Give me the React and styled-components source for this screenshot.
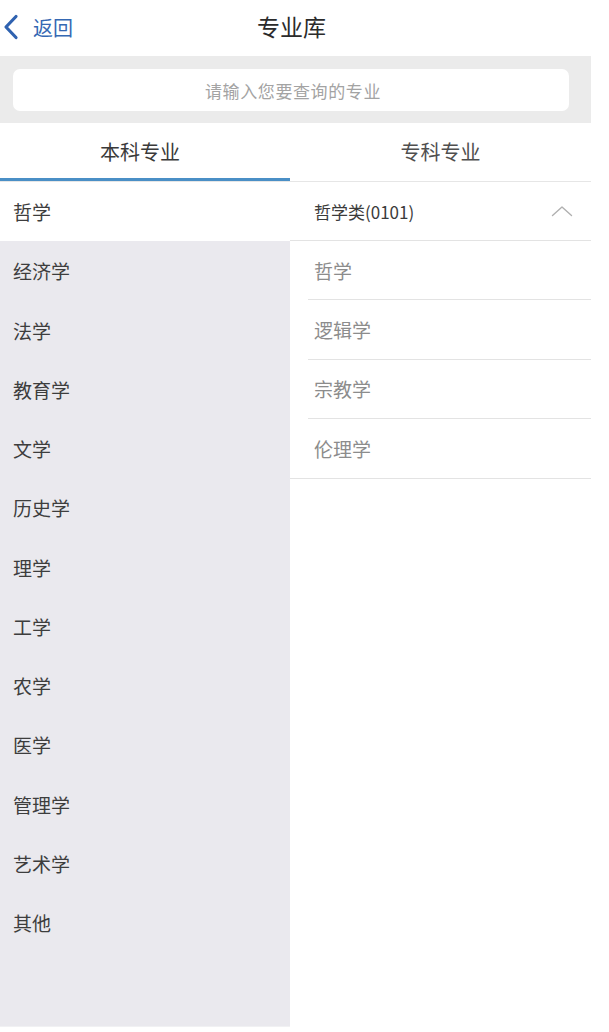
import React from "react";
import styled, { createGlobalStyle } from "styled-components";

const Global = createGlobalStyle`
  html, body { margin: 0; padding: 0; background: #ffffff; }
  body { font-family: "Noto Sans CJK SC", "Noto Sans", sans-serif; }
  * { box-sizing: border-box; }
`;

const Page = styled.div`
  width: 591px;
  height: 1032px;
  display: flex;
  flex-direction: column;
  background: #ffffff;
  overflow: hidden;
`;

const NavBar = styled.div`
  height: 56px;
  flex: none;
  position: relative;
  display: flex;
  align-items: center;
  justify-content: center;
`;

const BackButton = styled.div`
  position: absolute;
  left: 3px;
  top: 0;
  height: 56px;
  display: flex;
  align-items: center;
  gap: 14px;
  color: #3568b3;
  font-size: 20px;
  padding-bottom: 2px;
`;

const Title = styled.div`
  font-size: 23px;
  color: #2b2b2b;
  padding-bottom: 4px;
  padding-right: 8px;
`;

const SearchBand = styled.div`
  flex: none;
  height: 67px;
  background: #ebebeb;
  padding: 13px 22px 12px 13px;
`;

const SearchBox = styled.div`
  height: 42px;
  background: #ffffff;
  border-radius: 7px;
  display: flex;
  align-items: center;
  justify-content: center;
  color: #a3a3a3;
  font-size: 17px;
  letter-spacing: 0.6px;
  padding-left: 4px;
`;

const Tabs = styled.div`
  flex: none;
  height: 59px;
  display: grid;
  grid-template-columns: 290px 1fr;
  border-bottom: 1px solid #e6e6e6;
`;

const Tab = styled.div`
  display: flex;
  align-items: center;
  justify-content: center;
  font-size: 20px;
  color: ${(p) => (p.$active ? "#3a3a3a" : "#4f4f4f")};
  border-bottom: 3px solid ${(p) => (p.$active ? "#4a8fc6" : "transparent")};
  padding-top: 2px;
  padding-right: ${(p) => (p.$active ? "10px" : "0")};
`;

const Body = styled.div`
  flex: 1;
  display: flex;
  min-height: 0;
`;

const LeftColumn = styled.div`
  width: 290px;
  flex: none;
  height: 845px;
  background: #eae9ee;
  border-bottom: 1px solid #f1f1f3;
  display: flex;
  flex-direction: column;
`;

const LeftItem = styled.div`
  height: 59.25px;
  flex: none;
  display: flex;
  align-items: center;
  padding-left: 13px;
  font-size: 19px;
  color: #3d3d3d;
  background: ${(p) => (p.$active ? "#ffffff" : "transparent")};
`;

const RightColumn = styled.div`
  flex: 1;
  display: flex;
  flex-direction: column;
`;

const GroupHeader = styled.div`
  height: 59px;
  display: flex;
  align-items: center;
  justify-content: space-between;
  padding: 0 18px 0 24px;
  border-bottom: 1px solid #e3e3e3;
  font-size: 17px;
  color: #3b3b3b;
`;

const SubList = styled.div`
  display: flex;
  flex-direction: column;
  border-bottom: 1px solid #e3e3e3;
`;

const SubItem = styled.div`
  height: 59.25px;
  margin-left: 18px;
  padding-left: 6px;
  display: flex;
  align-items: center;
  font-size: 19px;
  color: #8c8c8c;
  border-bottom: ${(p) => (p.$last ? "none" : "1px solid #e3e3e3")};
`;

const ChevronLeft = () => (
  <svg width="16" height="26" viewBox="0 0 16 26" fill="none">
    <path d="M13 2.5 L3 13 L13 23.5" stroke="#2f62b0" strokeWidth="3.2" strokeLinecap="round" strokeLinejoin="round" />
  </svg>
);

const ChevronUp = () => (
  <svg width="22" height="12" viewBox="0 0 22 12" fill="none">
    <path d="M1.5 10.5 L11 2 L20.5 10.5" stroke="#b0b0b0" strokeWidth="1.4" strokeLinecap="round" strokeLinejoin="round" />
  </svg>
);

const categories = [
  "哲学", "经济学", "法学", "教育学", "文学", "历史学", "理学",
  "工学", "农学", "医学", "管理学", "艺术学", "其他",
];

const majors = ["哲学", "逻辑学", "宗教学", "伦理学"];

export default function App() {
  return (
    <>
      <Global />
      <Page>
        <NavBar>
          <BackButton>
            <ChevronLeft />
            <span>返回</span>
          </BackButton>
          <Title>专业库</Title>
        </NavBar>
        <SearchBand>
          <SearchBox>请输入您要查询的专业</SearchBox>
        </SearchBand>
        <Tabs>
          <Tab $active>本科专业</Tab>
          <Tab>专科专业</Tab>
        </Tabs>
        <Body>
          <LeftColumn>
            {categories.map((c, i) => (
              <LeftItem key={c + i} $active={i === 0}>{c}</LeftItem>
            ))}
          </LeftColumn>
          <RightColumn>
            <GroupHeader>
              <span>哲学类(0101)</span>
              <ChevronUp />
            </GroupHeader>
            <SubList>
              {majors.map((m, i) => (
                <SubItem key={m} $last={i === majors.length - 1}>{m}</SubItem>
              ))}
            </SubList>
          </RightColumn>
        </Body>
      </Page>
    </>
  );
}
